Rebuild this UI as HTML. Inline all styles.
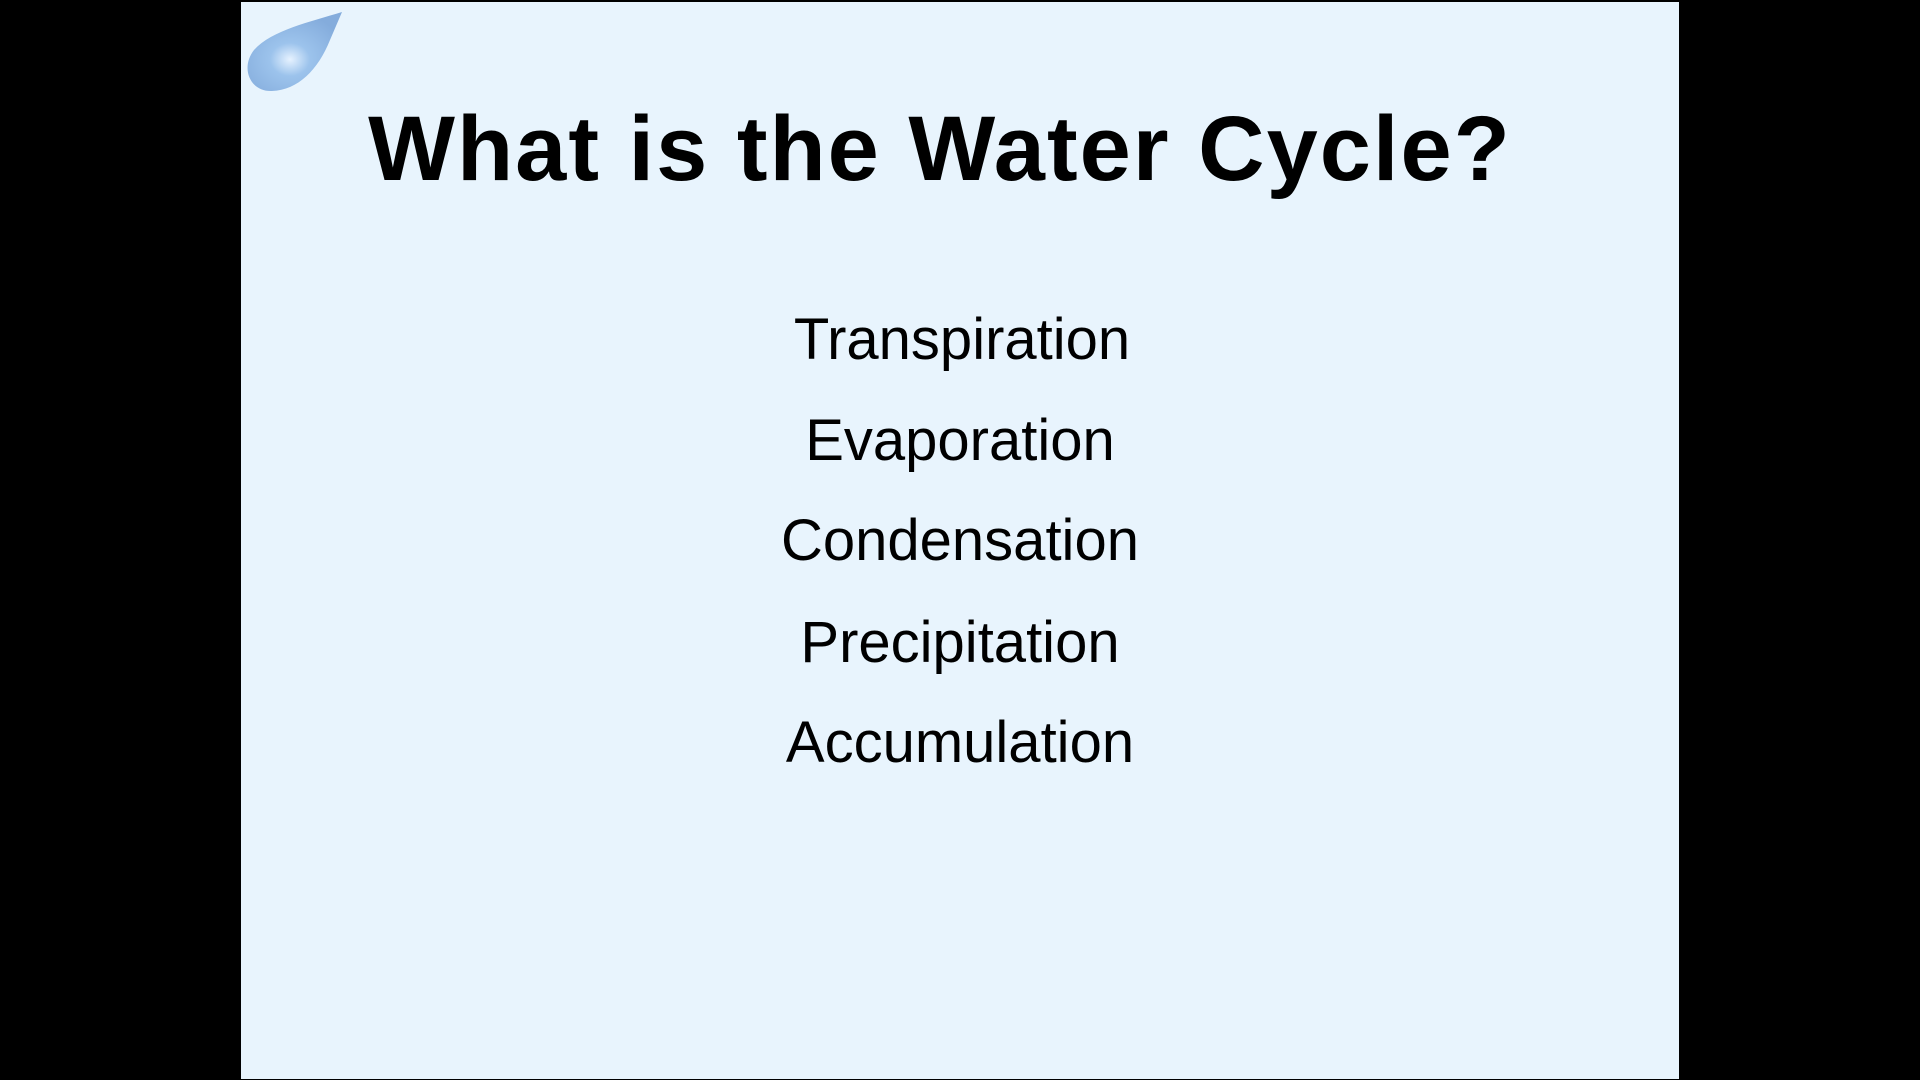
<!DOCTYPE html>
<html><head><style>
body{margin:0;width:1920px;height:1080px;background:#000;overflow:hidden;position:relative;font-family:"Liberation Sans",sans-serif}
.slide{position:absolute;left:241px;top:2px;width:1438px;height:1077px;background:#e8f4fd}
.t{position:absolute;left:0;width:100%;text-align:center;color:#000;white-space:nowrap}
h1{position:absolute;left:-20px;width:100%;text-align:center;margin:0;top:92px;font-size:92px;font-weight:bold;letter-spacing:2px;line-height:110px}
.i{font-size:58px;line-height:70px}
</style></head><body>
<div class="slide">
<svg style="position:absolute;left:0;top:0" width="120" height="100" viewBox="241 2 120 100">
<defs><radialGradient id="g" cx="0.45" cy="0.6" r="0.6"><stop offset="0" stop-color="#e6f2ff"/><stop offset="0.35" stop-color="#9cc3ec"/><stop offset="1" stop-color="#84acdc"/></radialGradient></defs>
<path d="M342 12 C310 22 272 30 254 50 C240 68 250 92 272 91 C298 90 318 70 330 40 Z" fill="url(#g)"/>
</svg>
<h1>What is the Water Cycle?</h1>
<div class="t i" style="top:303px;left:2px">Transpiration</div>
<div class="t i" style="top:404px">Evaporation</div>
<div class="t i" style="top:504px">Condensation</div>
<div class="t i" style="top:606px">Precipitation</div>
<div class="t i" style="top:706px">Accumulation</div>
</div>
</body></html>
